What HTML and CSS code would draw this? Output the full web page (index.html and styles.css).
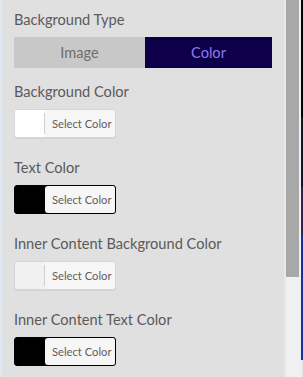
FILE: index.html
```html
<!DOCTYPE html>
<html>
<head>
<meta charset="utf-8">
<link rel="stylesheet" href="styles.css">
</head>
<body>
<div class="frame">
  <div class="edge"></div>
  <div class="panel">
    <div class="field first">
      <div class="label">Background Type</div>
      <div class="toggle">
        <div class="opt">Image</div>
        <div class="opt active">Color</div>
      </div>
    </div>
    <div class="field">
      <div class="label">Background Color</div>
      <div class="picker light white"><span class="swatch"></span><span class="txt">Select Color</span></div>
    </div>
    <div class="field">
      <div class="label">Text Color</div>
      <div class="picker dark"><span class="swatch"></span><span class="txt">Select Color</span></div>
    </div>
    <div class="field">
      <div class="label">Inner Content Background Color</div>
      <div class="picker light grey"><span class="swatch"></span><span class="txt">Select Color</span></div>
    </div>
    <div class="field">
      <div class="label">Inner Content Text Color</div>
      <div class="picker dark"><span class="swatch"></span><span class="txt">Select Color</span></div>
    </div>
  </div>
  <div class="scroll">
    <div class="thumb"></div>
  </div>
  <div class="side"></div>
</div>
</body>
</html>
```
FILE: styles.css
```css
html, body {
  margin: 0;
  padding: 0;
  height: 100%;
  overflow: hidden;
}
body {
  font-family: Lato, "Open Sans", sans-serif;
}
.frame {
  display: flex;
  height: 377px;
  width: 303px;
}
.edge {
  width: 2px;
  flex: 0 0 2px;
  background: #dde8f3;
}
.panel {
  flex: 1;
  background: #e0e0e0;
  padding: 10px 12px 0 12px;
  display: flex;
  flex-direction: column;
  overflow: hidden;
}
.field {
  display: flex;
  flex-direction: column;
  flex-shrink: 0;
  margin-bottom: 20px;
}
.field.first {
  margin-bottom: 14px;
}
.label {
  font-size: 14.6px;
  color: #5a5a5a;
  line-height: 20px;
  height: 20px;
  margin-bottom: 7px;
  white-space: nowrap;
}
.toggle {
  display: flex;
  width: 258px;
  height: 31px;
}
.opt {
  flex: 0 0 131px;
  background: #c8c8c8;
  color: #6e6e6e;
  font-size: 14.6px;
  display: flex;
  align-items: center;
  justify-content: center;
}
.opt.active {
  flex: 1;
  background: #0d0049;
  color: #8a7bef;
}
.picker {
  display: flex;
  width: 102px;
  height: 29px;
  box-sizing: border-box;
  border-radius: 3px;
  overflow: hidden;
}
.picker .swatch {
  flex: 0 0 30px;
  position: relative;
}
.picker .txt {
  flex: 1;
  font-size: 11.2px;
  color: #5e5e5e;
  display: flex;
  align-items: center;
  padding-left: 7px;
}
.picker.light {
  border: 1px solid #d6d6d6;
  background: #f6f6f6;
  box-shadow: 0 1px 0 #d2d2d2;
}
.picker.light .swatch::after {
  content: "";
  position: absolute;
  right: 0;
  top: 3px;
  bottom: 3px;
  width: 1px;
  background: #cfcfcf;
}
.picker.white .swatch {
  background: #ffffff;
}
.picker.grey .swatch {
  background: #f1f1f1;
}
.picker.dark {
  border: 1px solid #000;
  background: #000;
}
.picker.dark .txt {
  background: #f6f6f6;
  border-radius: 3px 0 0 3px;
}
.scroll {
  width: 17px;
  flex: 0 0 17px;
  background: #f0f0f0;
  border-left: 2px solid #e8e8e8;
  box-sizing: border-box;
  padding: 0 2px 0 0;
}
.thumb {
  height: 277px;
  background: #a8a8a8;
}
.side {
  width: 2px;
  flex: 0 0 2px;
  background: linear-gradient(to bottom, #050308 0, #050308 117px, #1a1020 117px, #1a1020 187px, #3a1f4a 187px, #3a1f4a 235px, #1a2f9a 235px, #1a2f9a 360px, #e8e8f0 360px);
}
```
